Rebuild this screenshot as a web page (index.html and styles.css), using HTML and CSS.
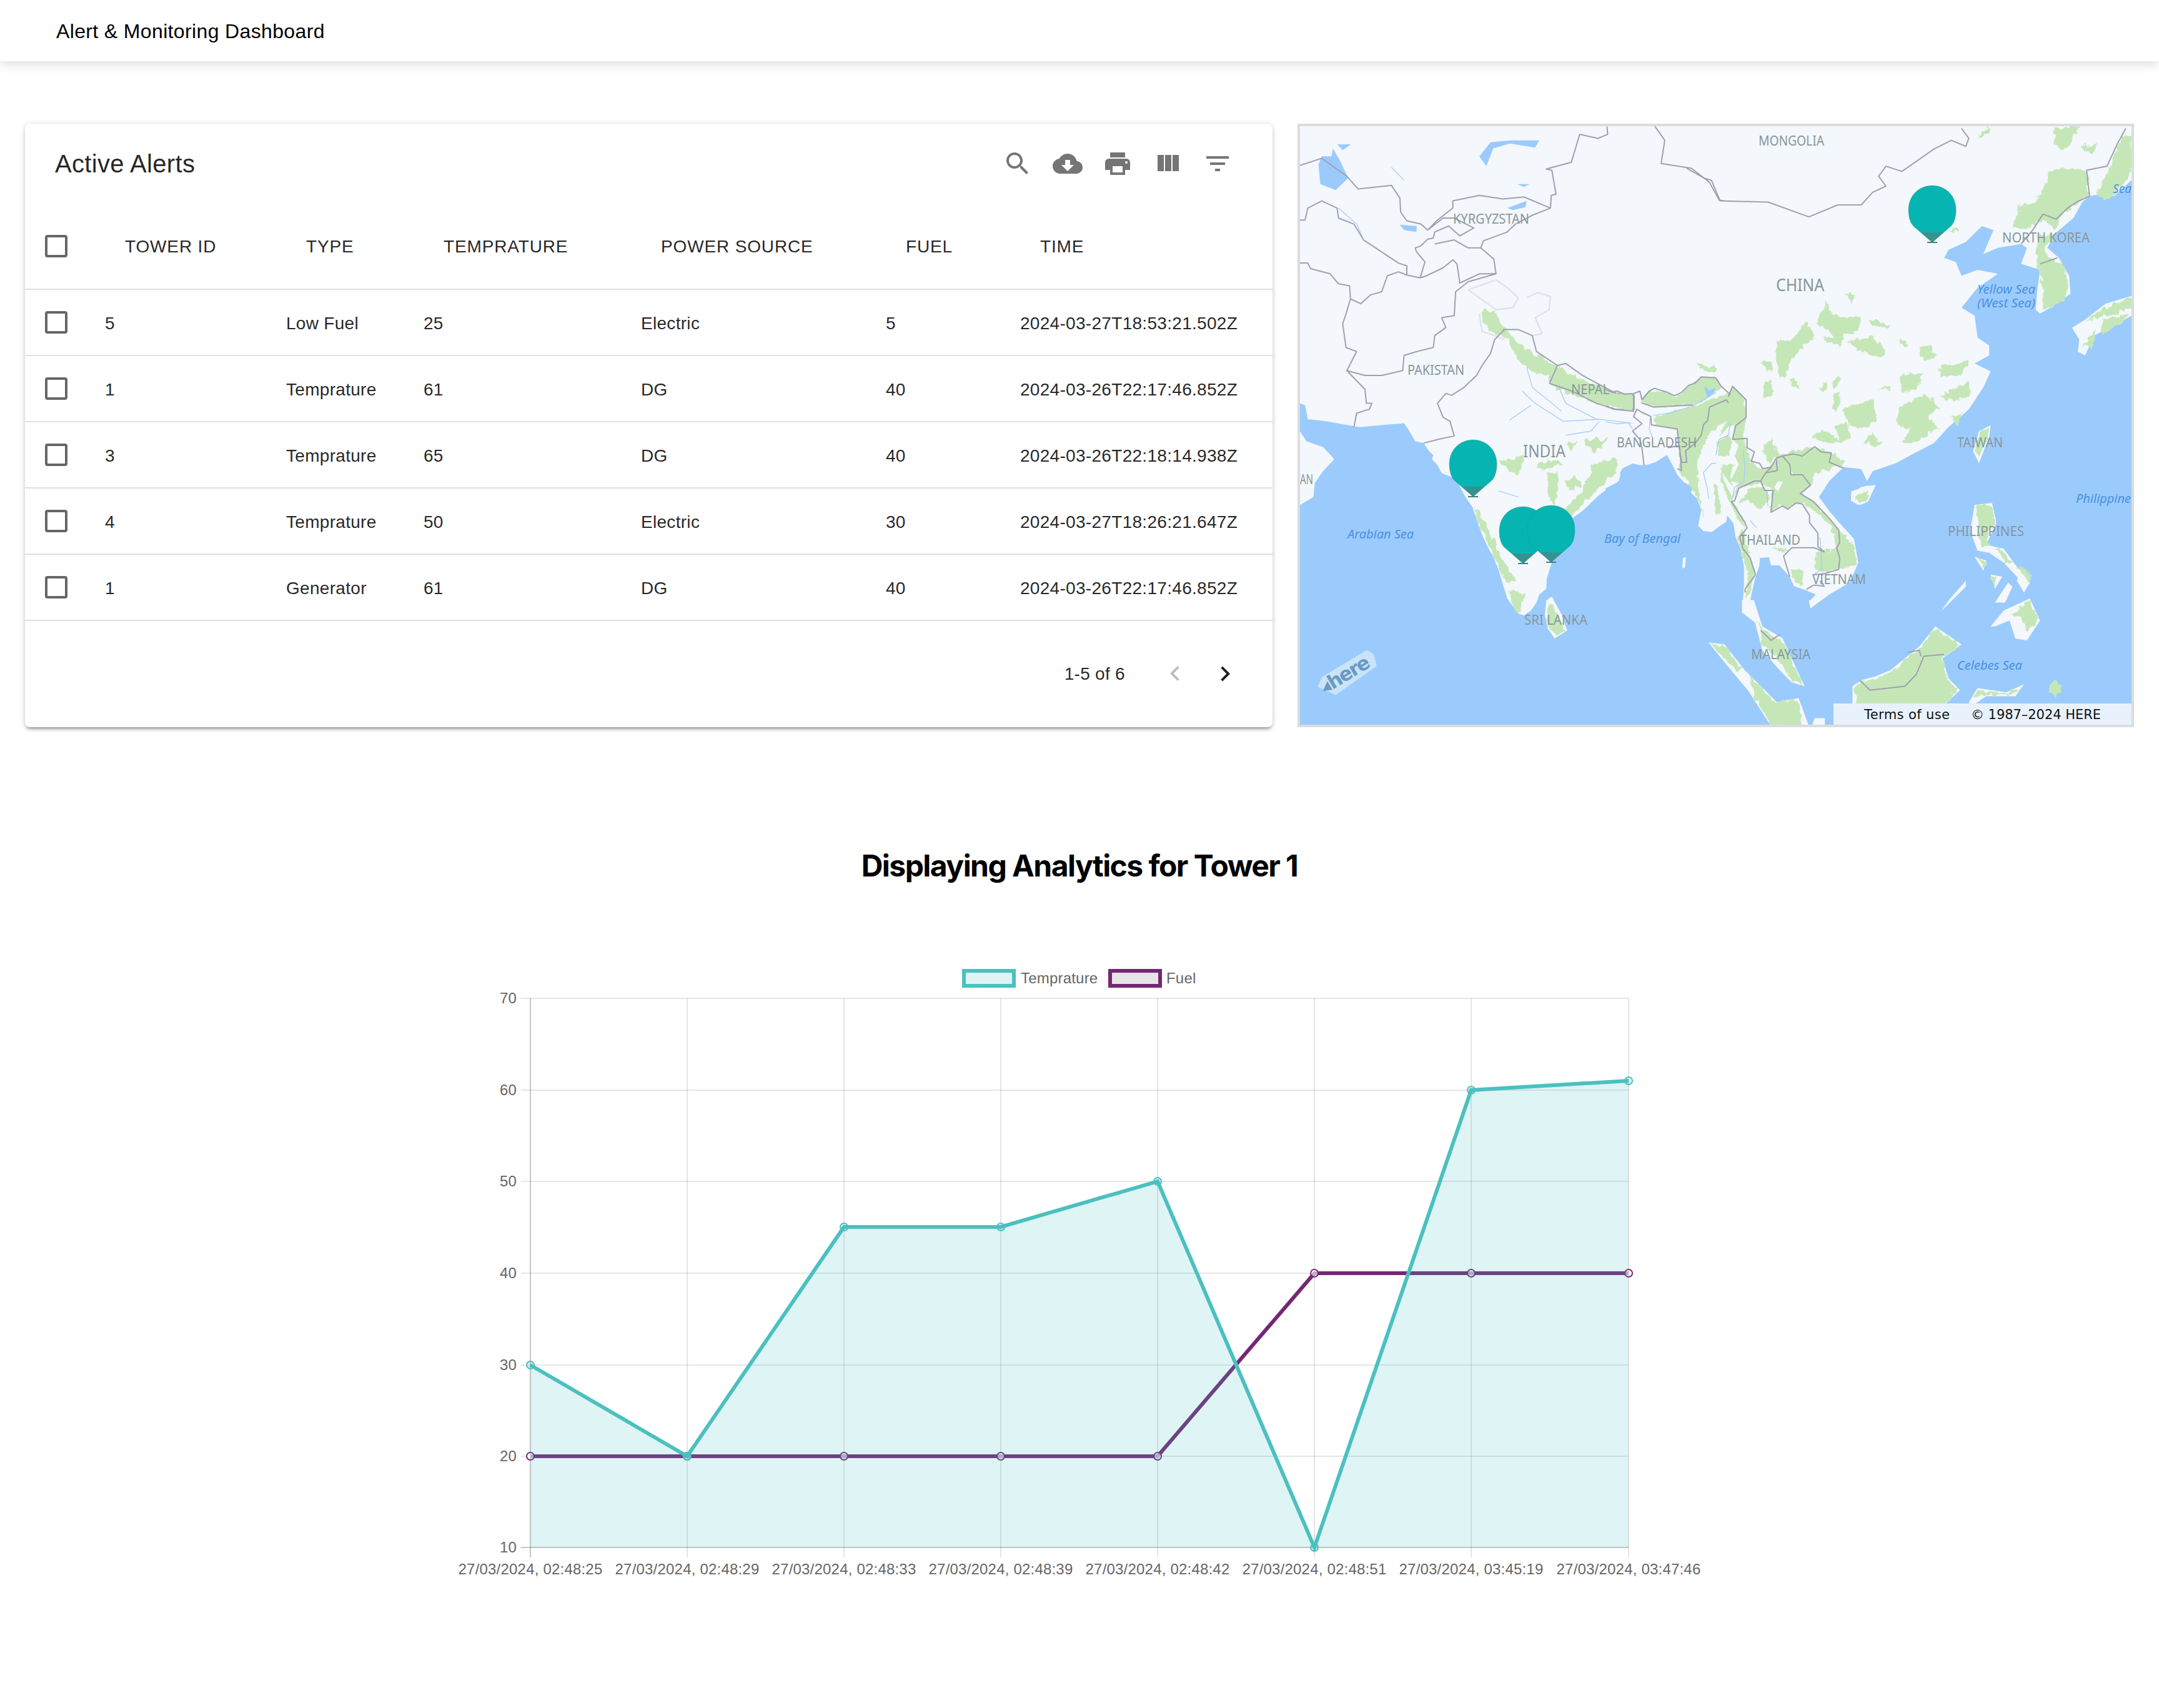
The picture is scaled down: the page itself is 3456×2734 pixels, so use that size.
FILE: index.html
```html
<!DOCTYPE html>
<html lang="en">
<head>
    <meta charset="UTF-8">
    <title>Alert &amp; Monitoring Dashboard</title>
    <link rel="stylesheet" href="styles.css">
</head>
<body>
<header class="appbar">Alert &amp; Monitoring Dashboard</header>

<section class="top-row">
    <div class="card">
        <div class="toolbar">
            <h2 class="card-title">Active Alerts</h2>
            <div class="tools">
                <svg class="icon tool" viewBox="0 0 24 24"><path d="M15.5 14h-.79l-.28-.27C15.41 12.59 16 11.11 16 9.5 16 5.91 13.09 3 9.5 3S3 5.91 3 9.5 5.91 16 9.5 16c1.61 0 3.09-.59 4.23-1.57l.27.28v.79l5 4.99L20.49 19l-4.99-5zm-6 0C7.01 14 5 11.99 5 9.5S7.01 5 9.5 5 14 7.01 14 9.5 11.99 14 9.5 14z"/></svg>
                <svg class="icon tool" viewBox="0 0 24 24"><path d="M19.35 10.04C18.67 6.59 15.64 4 12 4 9.11 4 6.6 5.64 5.35 8.04 2.34 8.36 0 10.91 0 14c0 3.31 2.69 6 6 6h13c2.76 0 5-2.24 5-5 0-2.64-2.05-4.78-4.65-4.96zM17 13l-5 5-5-5h3V9h4v4h3z"/></svg>
                <svg class="icon tool" viewBox="0 0 24 24"><path d="M19 8H5c-1.66 0-3 1.34-3 3v6h4v4h12v-4h4v-6c0-1.66-1.34-3-3-3zm-3 11H8v-5h8v5zm3-7c-.55 0-1-.45-1-1s.45-1 1-1 1 .45 1 1-.45 1-1 1zm-1-9H6v4h12V3z"/></svg>
                <svg class="icon tool" viewBox="0 0 24 24"><path d="M10 18h5V5h-5v13zm-6 0h5V5H4v13zM16 5v13h5V5h-5z"/></svg>
                <svg class="icon tool" viewBox="0 0 24 24"><path d="M10 18h4v-2h-4v2zM3 6v2h18V6H3zm3 7h12v-2H6v2z"/></svg>
            </div>
        </div>
        <table class="alerts">
            <colgroup>
                <col class="c-check"><col class="c-id"><col class="c-type"><col class="c-temp"><col class="c-power"><col class="c-fuel"><col class="c-time">
            </colgroup>
            <thead>
                <tr>
                    <th class="check"><span class="box"></span></th>
                    <th>TOWER ID</th><th>TYPE</th><th>TEMPRATURE</th><th>POWER SOURCE</th><th>FUEL</th><th>TIME</th>
                </tr>
            </thead>
            <tbody>
                <tr><td class="check"><span class="box"></span></td><td>5</td><td>Low Fuel</td><td>25</td><td>Electric</td><td>5</td><td>2024-03-27T18:53:21.502Z</td></tr>
                <tr><td class="check"><span class="box"></span></td><td>1</td><td>Temprature</td><td>61</td><td>DG</td><td>40</td><td>2024-03-26T22:17:46.852Z</td></tr>
                <tr><td class="check"><span class="box"></span></td><td>3</td><td>Temprature</td><td>65</td><td>DG</td><td>40</td><td>2024-03-26T22:18:14.938Z</td></tr>
                <tr><td class="check"><span class="box"></span></td><td>4</td><td>Temprature</td><td>50</td><td>Electric</td><td>30</td><td>2024-03-27T18:26:21.647Z</td></tr>
                <tr><td class="check"><span class="box"></span></td><td>1</td><td>Generator</td><td>61</td><td>DG</td><td>40</td><td>2024-03-26T22:17:46.852Z</td></tr>
            </tbody>
        </table>
        <div class="pager">
            <span class="pager-text">1-5 of 6</span>
            <svg class="icon page-btn off" viewBox="0 0 24 24"><path d="M15.41 16.09l-4.58-4.59 4.58-4.59L14 5.5l-6 6 6 6z"/></svg>
            <svg class="icon page-btn on" viewBox="0 0 24 24"><path d="M8.59 16.34l4.58-4.59-4.58-4.59L10 5.75l6 6-6 6z"/></svg>
        </div>
    </div>

    <div class="map">
        <svg class="map-svg" viewBox="2081 202 1331 958">
            <defs>
                <g id="pin">
                    <path fill="#06b5b2" stroke="#3d7f7e" stroke-opacity=".35" d="M0 0L-30 -26C-36 -32 -38 -43 -38 -52C-38 -76 -20 -91 0 -91C20 -91 38 -76 38 -52C38 -43 36 -32 30 -26Z"/>
                    <path fill="#36928f" d="M0 0L-18 -16H18Z"/>
                    <rect x="-8" y="-1" width="16" height="2" fill="#3d7f7e"/>
                </g>
                <filter id="rough" x="-15%" y="-15%" width="130%" height="130%" color-interpolation-filters="sRGB">
                    <feTurbulence type="fractalNoise" baseFrequency=".05" numOctaves="3" seed="4" result="noise"/>
                    <feDisplacementMap in="SourceGraphic" in2="noise" scale="22" xChannelSelector="R" yChannelSelector="G"/>
                </filter>
            </defs>
            <rect class="land" x="2081" y="202" width="1331" height="958"/>
            <rect class="sea" x="2630" y="950" width="80" height="210"/>

            <!-- west half, traced over the 700x1000 crop -->
            <g transform="translate(2060 180) scale(.4464 .6378)">
                <polygon class="sea" points="47,730 65,735 75,770 140,775 260,790 330,785 420,780 435,795 460,825 490,830 510,850 525,860 520,870 540,885 555,905 590,915 610,925 640,965 665,990 680,1020 700,1060 720,1090 740,1115 760,1150 790,1220 830,1258 850,1262 875,1250 895,1230 905,1210 930,1195 932,1170 945,1140 960,1110 1000,1050 1020,1020 1060,1000 1120,960 1190,925 1200,900 1240,885 1280,885 1300,884 1300,1540 47,1540"/>
                <polygon class="land" points="47,800 70,825 130,840 170,870 130,900 100,930 95,965 47,985"/>
                <polygon class="land" points="930,1225 950,1215 985,1260 1005,1300 960,1320 935,1295 925,1260"/>
                <polygon class="green" points="945,1228 985,1280 1000,1300 960,1315 935,1290 930,1250"/>
                <polygon class="sea" points="113,130 125,110 160,110 165,90 190,120 220,165 175,195 120,180"/>
                <polygon class="sea" points="180,80 230,80 200,95"/>
                <polygon class="sea" points="690,110 730,75 800,70 905,70 890,88 800,78 740,90 715,135"/>
                <polygon class="sea" points="790,240 860,222 855,238 810,245"/>
                <polygon class="sea" points="405,282 465,285 465,300 420,295"/>
                <polygon class="sea" points="825,180 870,180 850,187"/>
                <polygon class="green" points="700,500 740,495 770,530 830,580 900,610 970,635 1000,650 1090,680 1180,700 1245,715 1240,745 1120,730 1030,710 945,685 940,660 880,650 830,620 790,570 730,545 705,530"/>
                <polygon class="green" points="760,875 855,860 800,905"/>
                <polygon class="green" points="800,885 850,870 830,905 790,905"/>
                <polygon class="green" points="1065,820 1150,820 1100,855"/>
                <polygon class="green" points="1000,830 1040,825 1020,850"/>
                <polygon class="green" points="895,885 960,870 990,880 920,900"/>
                <polygon class="green" points="935,900 975,905 960,990 935,965"/>
                <polygon class="green" points="1000,925 1030,915 1060,935 1010,945"/>
                <polygon class="green" points="1060,950 1100,880 1180,870 1185,895 1130,935 1060,985 1020,1015 990,1000"/>
                <polygon class="green" points="675,990 700,1020 745,1080 780,1130 820,1175 790,1180 750,1130 720,1080 680,1020"/>
                <polygon class="green" points="800,1200 850,1205 835,1260 810,1240"/>
                <polyline class="river" points="845,700 890,730 990,775 1120,770 1240,780"/>
                <polyline class="river" points="860,640 880,690 985,750"/>
                <polyline class="river" points="975,690 1000,730 1110,770"/>
                <polyline class="river" points="798,772 875,735"/>
                <polyline class="river" points="1000,810 1090,800 1120,775"/>
                <polyline class="river" points="760,950 830,965"/>
                <polyline class="river" points="375,138 420,170"/>
                <polyline class="river" points="185,240 250,280 275,320"/>
                <polyline class="border" points="47,133 125,115 215,160 255,192 375,183 405,215 408,250 430,272 480,280 505,295 540,270 595,240 595,222 690,208 775,217 850,212 945,240 948,208 965,205 950,145 930,142 1020,125 1050,55 1115,65 1150,55 1148,35"/>
                <polyline class="border" points="1320,35 1355,70 1342,128 1450,140 1515,175 1550,220 1568,222"/>
                <polyline class="border" points="47,270 65,270 75,240 125,222 180,240 185,265 240,280 275,320 400,378 430,385 430,408 478,415 500,410 560,390 595,370 610,380 620,428 690,405 750,405 742,368 695,340 705,322 790,300 820,280 880,258 945,240"/>
                <polyline class="border" points="505,295 560,265 600,265 670,290 620,310 580,285 530,300 525,315 505,318 480,335 460,340 465,350 495,375 478,415"/>
                <polyline class="border" points="530,330 600,320 650,340 695,340"/>
                <polyline class="border" points="47,378 75,378 85,392 155,405 185,430 225,435 228,468 265,480 300,458 340,450 360,410 400,400 430,408"/>
                <polyline class="border" points="228,468 210,510 200,530 212,590 250,600 215,648 280,660 340,660 415,648 420,610 465,600 525,590 530,560 570,540 555,515 600,510 605,450 650,425 750,405"/>
                <polyline class="border" points="215,648 280,695 285,730 305,730 295,745 250,755 240,790"/>
                <polyline class="border-soft" points="650,445 700,470 750,495 810,490 830,465 790,440 750,420 650,445"/>
                <polyline class="border-soft" points="860,465 900,452 945,462 940,495 890,515 915,555 880,560"/>
                <polyline class="border-soft" points="690,505 700,550 745,560 780,570"/>
                <polyline class="border" points="780,545 745,570 730,605 700,635 680,660 635,690 590,710 570,705 540,730 560,765 585,775 600,812 545,820 490,830"/>
                <polyline class="border" points="775,545 830,545 880,560 895,600 970,635 1000,630 1060,660 1180,705 1245,710"/>
                <polyline class="border" points="970,635 942,680 1025,700 1110,730 1180,745 1245,745 1245,710"/>
            </g>

            <!-- east half -->
            <g transform="translate(2700 180) scale(.4655 .6378)">
                <polygon class="sea" points="425,1245 490,1210 560,1180 590,1130 575,1070 525,1030 490,1000 455,965 490,925 540,890 600,895 620,925 640,900 720,880 770,860 850,830 900,790 970,745 1020,690 1045,650 990,630 1040,610 1040,585 1000,565 990,510 945,490 1000,440 1070,405 1000,395 945,410 925,375 885,365 900,345 960,325 1015,285 1055,295 1020,355 1070,340 1150,330 1170,340 1150,380 1215,395 1205,450 1200,495 1215,505 1250,490 1320,455 1315,410 1280,365 1240,340 1265,305 1330,265 1360,225 1385,210 1420,205 1470,210 1530,170 1530,1540 0,1540 0,1223 420,1223"/>
                <polygon class="land" points="1325,540 1370,520 1440,480 1530,460 1530,510 1480,530 1400,560 1370,610 1345,600 1350,570"/>
                <polygon class="green" points="1370,525 1440,490 1530,465 1530,490 1450,510"/>
                <polygon class="green" points="1360,590 1410,545 1395,585"/>
                <polygon class="green" points="1425,520 1520,505 1490,530 1430,555"/>
                <polygon class="land" points="985,850 1005,800 1045,785 1040,815 1005,880"/>
                <polygon class="green" points="990,850 1010,800 1040,790 1035,815 1005,860"/>
                <polygon class="land" points="565,960 600,940 650,935 625,975 590,985 565,975"/>
                <polygon class="green" points="580,960 615,950 600,975"/>
                <polygon class="land" points="990,985 1050,980 1065,1030 1030,1085 1090,1095 1125,1130 1180,1180 1155,1180 1090,1130 1040,1105 1000,1100 975,1050"/>
                <polygon class="green" points="995,985 1050,985 1060,1030 1030,1065 1040,1090 1015,1090 1005,1040"/>
                <polygon class="green" points="1060,1095 1090,1100 1125,1135 1100,1130"/>
                <polygon class="land" points="1045,1290 1090,1250 1180,1220 1215,1275 1170,1325 1130,1320 1110,1275 1060,1290"/>
                <polygon class="green" points="1115,1260 1180,1225 1210,1275 1170,1300 1150,1270"/>
                <polygon class="land" points="1045,1160 1085,1165 1060,1195"/>
                <polygon class="green" points="1045,1165 1070,1165 1055,1190"/>
                <polygon class="land" points="1060,1230 1105,1180 1120,1190 1095,1230"/>
                <polygon class="land" points="990,1115 1030,1125 1020,1150"/>
                <polygon class="green" points="1000,1118 1028,1128 1020,1145"/>
                <polygon class="land" points="1150,1140 1180,1180 1160,1205 1135,1175"/>
                <polygon class="green" points="1130,1140 1180,1150 1180,1180"/>
                <polygon class="land" points="875,1252 960,1190 960,1175 900,1225"/>
                <polygon class="land" points="190,1210 225,1210 260,1290 330,1320 405,1440 360,1430 320,1400 260,1350 235,1280 190,1255"/>
                <polygon class="green" points="240,1270 260,1300 330,1325 400,1435 360,1425 300,1360 260,1340"/>
                <polygon class="land" points="75,1330 130,1335 200,1400 310,1480 385,1470 420,1540 290,1540 210,1450 130,1380"/>
                <polygon class="green" points="78,1332 130,1338 190,1400 170,1400 130,1370"/>
                <polygon class="green" points="215,1410 300,1480 380,1475 400,1540 290,1540 235,1470"/>
                <polygon class="land" points="440,1520 475,1520 475,1540 430,1540"/>
                <polygon class="land" points="570,1440 600,1425 650,1415 700,1400 800,1340 855,1290 945,1335 880,1370 900,1420 940,1450 880,1490 570,1540"/>
                <polygon class="green" points="578,1445 600,1430 650,1420 700,1405 800,1345 855,1295 940,1335 878,1370 895,1420 930,1450 870,1500 590,1540"/>
                <polygon class="land" points="970,1480 1000,1445 1100,1455 1160,1435 1130,1465 1030,1465 980,1490"/>
                <polygon class="green" points="1000,1448 1100,1458 1150,1440 1125,1460 1030,1462 985,1475"/>
                <polygon class="green" points="1245,1445 1265,1420 1290,1440 1270,1470"/>
                <polygon class="green" points="1265,40 1350,35 1320,80 1290,95 1265,80"/>
                <polygon class="green" points="1000,65 1040,35 1040,55"/>
                <polygon class="green" points="1350,85 1410,80 1395,105"/>
                <polygon class="green" points="1470,110 1490,60 1530,60 1530,150 1490,190 1440,220 1410,205"/>
                <polygon class="green" points="1250,145 1310,140 1380,150 1380,210 1300,250 1270,290 1230,270 1170,290 1120,290 1140,235 1200,225 1240,170"/>
                <polygon class="green" points="1215,310 1270,310 1230,340 1240,360 1290,380 1320,440 1295,475 1230,495 1220,420 1200,370"/>
                <polygon class="green" points="450,520 480,470 500,505 600,515 580,550 540,555 530,585 490,550 440,530"/>
                <polygon class="green" points="625,520 700,530 690,540 640,535"/>
                <polygon class="green" points="555,575 640,560 685,600 670,615 590,595"/>
                <polygon class="green" points="730,570 765,585 750,590"/>
                <polygon class="green" points="550,450 580,460 565,482"/>
                <polygon class="green" points="800,590 830,585 860,610 815,628"/>
                <polygon class="green" points="310,575 360,570 410,525 440,560 380,590 345,640 320,665 305,610"/>
                <polygon class="green" points="250,625 290,630 290,650"/>
                <polygon class="green" points="270,670 300,700 265,715"/>
                <polygon class="green" points="450,695 485,675 470,695"/>
                <polygon class="green" points="500,680 530,660 510,690"/>
                <polygon class="green" points="650,695 700,688 700,698"/>
                <polygon class="green" points="510,705 525,700 515,750 500,745"/>
                <polygon class="green" points="860,640 970,620 945,660 880,665"/>
                <polygon class="green" points="735,660 815,652 795,690 740,705"/>
                <polygon class="green" points="870,710 975,675 975,710 915,725"/>
                <polygon class="green" points="730,740 820,705 870,740 830,760 865,790 790,830 740,830 770,795 725,785"/>
                <polygon class="green" points="535,745 640,720 655,770 600,795 560,785"/>
                <polygon class="green" points="435,810 490,800 525,825 450,830"/>
                <polygon class="green" points="505,785 550,780 560,820 530,825"/>
                <polygon class="green" points="605,830 640,805 675,835 620,835"/>
                <polygon class="green" points="910,765 945,755 930,785"/>
                <polygon class="green" points="290,820 320,860 430,840 495,855 545,875 500,895 440,905 425,940 310,870"/>
                <polygon class="green" points="895,300 930,290 935,300"/>
                <polyline class="border" points="0,140 60,165 85,170 115,222 280,225 420,262 520,232 600,232 640,200 685,185 660,160 685,135 740,148 850,92 910,70 960,85 970,65 945,40"/>
                <polyline class="border" points="1510,40 1480,80 1445,135 1375,145 1385,210 1340,225 1310,240 1270,268 1225,255 1190,295 1150,330"/>
                <polyline class="border" points="1215,380 1275,365"/>
                <polyline class="border" points="255,1300 290,1325 320,1310"/>
                <polyline class="border" points="595,1425 630,1450 750,1440 790,1410 815,1365 885,1360"/>
                <polyline class="border" points="760,1355 800,1350 805,1365"/>
            </g>

            <!-- burma, thailand and indochina, from the 420x420 crop -->
            <g transform="translate(2570 540) scale(.3333)">
                <polygon class="sea" points="0,725 60,695 75,680 70,650 80,630 130,605 180,618 240,600 295,565 320,610 345,660 375,695 420,720 410,745 440,775 460,830 445,905 470,930 510,935 550,905 580,885 585,855 615,895 625,960 650,1020 665,1100 665,1190 660,1262 0,1262"/>
                <polygon class="sea" points="695,1262 720,1150 738,1100 742,1060 785,1055 795,1095 835,1095 885,1150 905,1195 965,1215 1010,1235 985,1262"/>
                <polygon class="land" points="368,1110 372,1060 386,1055 382,1105"/>
                <polygon class="green" points="0,270 130,270 135,340 100,350 0,320"/>
                <polygon class="green" points="170,310 210,260 300,265 340,290 400,235 460,190 530,190 560,240 480,300 420,325 230,335"/>
                <polygon class="green" points="230,385 340,350 440,330 500,300 590,270 610,235 660,280 675,380 660,490 680,530 700,600 740,630 790,620 830,580 880,620 890,660 960,660 990,710 940,750 1000,790 1070,870 1120,920 1190,1000 1210,1090 1120,1110 1040,1130 1000,1100 1110,1000 1080,900 1000,830 960,800 920,795 880,825 840,805 790,840 800,730 750,700 640,720 610,780 660,870 670,920 640,880 600,800 550,680 560,620 600,590 570,540 540,560 530,520 580,400 500,460 460,550 440,600 450,750 470,870 445,780 400,700 350,640 360,600 345,500 345,440 240,420"/>
                <polygon class="land" points="530,560 545,480 590,430 620,420 610,490 640,520 620,570 640,610 600,690 640,700 610,770 570,690 555,630 590,600"/>
                <polygon class="green" points="545,500 590,470 610,500 590,570 540,570"/>
                <polygon class="green" points="550,630 590,605 620,610 600,650 610,720 590,690"/>
                <polygon class="land" points="460,600 500,570 535,570 525,620 550,690 530,700 515,850 490,770 470,690"/>
                <polygon class="green" points="520,705 540,720 555,850 530,850"/>
                <polygon class="land" points="810,720 830,690 850,695 830,740"/>
                <polygon class="green" points="630,800 700,720 750,720 780,730 790,780 740,830 680,780"/>
                <polygon class="green" points="760,520 800,490 820,570 790,610 760,560"/>
                <polygon class="green" points="960,560 1010,530 1080,560 1075,600 1150,590 1130,625 1060,610 1000,600"/>
                <polygon class="green" points="890,570 940,580 970,630 940,620"/>
                <polygon class="green" points="660,920 680,1000 700,1070 720,1120 695,1220 670,1260 685,1140 660,1060 630,960"/>
                <polygon class="green" points="790,1005 880,1020 850,1030"/>
                <polygon class="green" points="890,1110 950,1120 945,1190 920,1180 895,1150"/>
                <polygon class="green" points="1010,1030 1080,1010 1050,1080 1040,1115 1010,1090"/>
                <polygon class="green" points="0,640 45,585 60,610 20,650"/>
                <polygon class="green" points="1030,255 1060,220 1070,240 1040,260"/>
                <polygon class="green" points="1090,230 1120,185 1130,200 1105,240"/>
                <polygon class="green" points="1090,330 1120,265 1125,310 1105,360"/>
                <polygon class="green" points="1140,350 1210,320 1260,310 1260,430 1220,430 1180,390"/>
                <polygon class="green" points="1000,480 1040,450 1110,490 1130,505 1090,510"/>
                <polygon class="green" points="1100,420 1160,420 1170,480 1130,490"/>
                <polygon class="green" points="760,260 790,200 800,280 770,285"/>
                <polygon class="green" points="745,110 800,120 800,165 780,160"/>
                <polygon class="green" points="820,60 860,20 900,60 880,140 860,200 840,180"/>
                <polygon class="green" points="880,100 930,20 1010,0 950,40 900,100"/>
                <polygon class="green" points="880,200 910,195 930,245 900,235"/>
                <polygon class="green" points="1045,0 1140,0 1130,40 1060,20"/>
                <polygon class="green" points="1165,15 1260,10 1260,65 1210,60"/>
                <polygon class="green" points="430,120 500,145 525,130 530,165 490,170"/>
                <polygon class="land" points="1180,740 1260,710 1260,790 1225,805 1180,780"/>
                <polygon class="green" points="1195,770 1260,735 1260,780 1220,795"/>
                <polyline class="river" points="230,375 300,365 420,330 480,295 530,265"/>
                <polygon class="sea" points="475,235 500,255 530,240 520,265 490,290 480,260"/>
                <polyline class="river" points="215,385 210,440 225,480"/>
                <polyline class="river" points="0,405 60,415 110,410 130,440"/>
                <polyline class="river" points="530,565 545,490 590,470 600,410"/>
                <polyline class="river" points="470,650 510,605 530,605"/>
                <polyline class="river" points="470,650 490,730 495,775"/>
                <polyline class="river" points="660,540 670,620 665,690 620,720 610,770"/>
                <polyline class="river" points="695,880 725,915"/>
                <polyline class="river" points="775,740 780,810"/>
                <polyline class="river" points="1030,960 1035,1020 1040,1110 1000,1140"/>
                <polyline class="border" points="0,250 35,265 55,258 90,272 135,270 165,258 175,300 210,258 235,245 300,265 330,280 365,265 400,230 430,220 460,190 530,195 555,235 600,275"/>
                <polyline class="border" points="0,330 40,345 135,355 135,270"/>
                <polyline class="border" points="175,315 230,335 420,325"/>
                <polyline class="border" points="590,315 580,300 500,335 490,400 470,420 460,470 430,510 385,545 390,600 365,600 350,500 345,440 220,420 218,380 175,360 150,345 135,380 175,415 130,450 165,490 175,530 185,615"/>
                <polyline class="border" points="300,530 355,520 365,640 345,630"/>
                <polyline class="border" points="590,285 610,235 660,285 675,300 675,385 625,425 610,490 680,485 680,530 715,550 700,595 740,605 755,630 795,625 770,650 745,690 715,690 640,725 620,785 605,790 625,820 670,890 680,915 645,960 660,1015 695,1060 720,1140 670,1210 670,1225"/>
                <polyline class="border" points="745,690 765,735 805,735 795,840 850,810 875,825 915,795 945,800 980,855 980,890 1020,940 1020,1005 1050,1030 1000,1010 895,1010 855,1050 885,1150"/>
                <polyline class="border" points="820,580 850,570 885,610 890,660 945,660 985,710 935,750 1000,790 1075,870 1120,925 1125,985 1110,1010 1125,1060 1120,1115 1050,1135 1000,1140"/>
                <polyline class="border" points="850,570 900,560 945,570 1005,525 1035,550 1085,555 1075,600 1145,628"/>
                <polyline class="border" points="795,625 820,580 825,640 770,650"/>
                <polyline class="border" points="965,1210 1000,1190 1050,1195 1030,1170"/>
            </g>

            <text class="lbl" x="2326" y="358" textLength="122" lengthAdjust="spacingAndGlyphs">KYRGYZSTAN</text>
            <text class="lbl" x="2253" y="600" textLength="91" lengthAdjust="spacingAndGlyphs">PAKISTAN</text>
            <text class="lbl" x="2515" y="631" textLength="61" lengthAdjust="spacingAndGlyphs">NEPAL</text>
            <text class="lbl big" x="2438" y="732" textLength="68" lengthAdjust="spacingAndGlyphs">INDIA</text>
            <text class="lbl" x="2588" y="716" textLength="128" lengthAdjust="spacingAndGlyphs">BANGLADESH</text>
            <text class="lbl" x="2081" y="775" textLength="21" lengthAdjust="spacingAndGlyphs">AN</text>
            <text class="lbl" x="2440" y="1000" textLength="101" lengthAdjust="spacingAndGlyphs">SRI LANKA</text>
            <text class="lbl" x="2815" y="233" textLength="105" lengthAdjust="spacingAndGlyphs">MONGOLIA</text>
            <text class="lbl" x="3205" y="388" textLength="140" lengthAdjust="spacingAndGlyphs">NORTH KOREA</text>
            <text class="lbl big" x="2843" y="466" textLength="77" lengthAdjust="spacingAndGlyphs">CHINA</text>
            <text class="lbl" x="3133" y="716" textLength="73" lengthAdjust="spacingAndGlyphs">TAIWAN</text>
            <text class="lbl" x="3118" y="858" textLength="122" lengthAdjust="spacingAndGlyphs">PHILIPPINES</text>
            <text class="lbl" x="2785" y="872" textLength="97" lengthAdjust="spacingAndGlyphs">THAILAND</text>
            <text class="lbl" x="2901" y="935" textLength="86" lengthAdjust="spacingAndGlyphs">VIETNAM</text>
            <text class="lbl" x="2803" y="1055" textLength="95" lengthAdjust="spacingAndGlyphs">MALAYSIA</text>
            <text class="lbl-sea" x="2157" y="862" textLength="106" lengthAdjust="spacingAndGlyphs">Arabian Sea</text>
            <text class="lbl-sea" x="2568" y="869" textLength="122" lengthAdjust="spacingAndGlyphs">Bay of Bengal</text>
            <text class="lbl-sea" x="3165" y="470" textLength="93" lengthAdjust="spacingAndGlyphs">Yellow Sea</text>
            <text class="lbl-sea" x="3165" y="492" textLength="93" lengthAdjust="spacingAndGlyphs">(West Sea)</text>
            <text class="lbl-sea" x="3382" y="309" textLength="30" lengthAdjust="spacingAndGlyphs">Sea</text>
            <text class="lbl-sea" x="3323" y="805" textLength="88" lengthAdjust="spacingAndGlyphs">Philippine</text>
            <text class="lbl-sea" x="3133" y="1072" textLength="104" lengthAdjust="spacingAndGlyphs">Celebes Sea</text>

            <use href="#pin" x="2358" y="795"/>
            <use href="#pin" x="2438" y="902"/>
            <use href="#pin" x="2483" y="900"/>
            <use href="#pin" x="3093" y="388"/>

            <g transform="translate(2160 1083) rotate(-31)">
                <polygon class="here-bg" points="-52,-12 -38,-22 46,-22 52,-10 46,8 -34,14"/>
                <polygon class="here-text" points="-48,-2 -34,-12 -34,4"/>
                <text class="here-text" x="-34" y="4">here</text>
            </g>

            <rect class="terms-bg" x="2935" y="1126" width="477" height="34"/>
            <text class="terms" x="2984" y="1151" textLength="137">Terms of use</text>
            <text class="terms" x="3155" y="1151" textLength="208">© 1987–2024 HERE</text>
        </svg>
    </div>
</section>

<h2 class="analytics-title">Displaying Analytics for Tower 1</h2>

<svg class="chart" viewBox="720 1530 2016 1000">
    <!-- legend -->
    <rect class="legend-temp" x="1543" y="1554" width="80" height="24"/>
    <text class="tick" x="1634" y="1574">Temprature</text>
    <rect class="legend-fuel" x="1777" y="1554" width="80" height="24"/>
    <text class="tick" x="1867" y="1574">Fuel</text>

    <!-- horizontal grid -->
    <path class="grid" d="M834 1598H2607M834 1745H2607M834 1891H2607M834 2038H2607M834 2185H2607M834 2331H2607"/>
    <path class="axis" d="M834 2477H2607"/>
    <!-- vertical grid -->
    <path class="grid" d="M1100 1598V2493M1351 1598V2493M1602 1598V2493M1853 1598V2493M2104 1598V2493M2355 1598V2493M2607 1598V2493"/>
    <path class="axis" d="M849 1598V2493"/>

    <g class="tick-y">
        <text x="827" y="1606">70</text>
        <text x="827" y="1753">60</text>
        <text x="827" y="1899">50</text>
        <text x="827" y="2046">40</text>
        <text x="827" y="2193">30</text>
        <text x="827" y="2339">20</text>
        <text x="827" y="2485">10</text>
    </g>
    <g class="tick-x">
        <text x="849" y="2520">27/03/2024, 02:48:25</text>
        <text x="1100" y="2520">27/03/2024, 02:48:29</text>
        <text x="1351" y="2520">27/03/2024, 02:48:33</text>
        <text x="1602" y="2520">27/03/2024, 02:48:39</text>
        <text x="1853" y="2520">27/03/2024, 02:48:42</text>
        <text x="2104" y="2520">27/03/2024, 02:48:51</text>
        <text x="2355" y="2520">27/03/2024, 03:45:19</text>
        <text x="2607" y="2520">27/03/2024, 03:47:46</text>
    </g>

    <!-- fuel sits under the temprature fill, as the chart draws it -->
    <polyline class="line-fuel" points="849,2331 1100,2331 1351,2331 1602,2331 1853,2331 2104,2038 2355,2038 2607,2038"/>
    <g class="dot-fuel">
        <circle cx="849" cy="2331" r="6"/><circle cx="1100" cy="2331" r="6"/><circle cx="1351" cy="2331" r="6"/><circle cx="1602" cy="2331" r="6"/><circle cx="1853" cy="2331" r="6"/><circle cx="2104" cy="2038" r="6"/><circle cx="2355" cy="2038" r="6"/><circle cx="2607" cy="2038" r="6"/>
    </g>
    <polygon class="fill-temp" points="849,2185 1100,2331 1351,1964 1602,1964 1853,1891 2104,2477 2355,1745 2607,1730 2607,2477 849,2477"/>
    <polyline class="line-temp" points="849,2185 1100,2331 1351,1964 1602,1964 1853,1891 2104,2477 2355,1745 2607,1730"/>
    <g class="dot-temp">
        <circle cx="849" cy="2185" r="6"/><circle cx="1100" cy="2331" r="6"/><circle cx="1351" cy="1964" r="6"/><circle cx="1602" cy="1964" r="6"/><circle cx="1853" cy="1891" r="6"/><circle cx="2104" cy="2477" r="6"/><circle cx="2355" cy="1745" r="6"/><circle cx="2607" cy="1730" r="6"/>
    </g>
</svg>
</body>
</html>
```

FILE: styles.css
```css
body, html {
    margin: 0;
    padding: 0;
    background-color: #fff;
    font-family: "Liberation Sans", Arial, sans-serif;
}

.appbar {
    height: 98px;
    line-height: 100px;
    padding-left: 90px;
    font-size: 32px;
    letter-spacing: 0.36px;
    color: #000;
    background-color: #fff;
    box-shadow: 0 6px 16px rgba(0, 0, 0, 0.12);
}

.top-row {
    display: flex;
    gap: 40px;
    padding: 100px 40px 0;
}

.card {
    width: 1997px;
    height: 966px;
    border-radius: 8px;
    background-color: #fff;
    box-shadow: 0 6px 4px -4px rgba(0, 0, 0, 0.3), 0 4px 6px rgba(0, 0, 0, 0.14), 0 0 10px rgba(0, 0, 0, 0.12);
}

.toolbar {
    display: flex;
    align-items: center;
    justify-content: space-between;
    height: 128px;
    padding: 0 48px;
}

.card-title {
    margin: 0;
    font-size: 40px;
    font-weight: 400;
    letter-spacing: 0.32px;
    color: rgba(0, 0, 0, 0.87);
}

.tools {
    display: flex;
}

.icon {
    display: block;
    width: 48px;
    height: 48px;
}

.tool {
    padding: 16px;
    fill: #757575;
}

.alerts {
    width: 1997px;
    table-layout: fixed;
    border-collapse: collapse;
    font-size: 28px;
    letter-spacing: 0.3px;
    color: rgba(0, 0, 0, 0.87);
}

.c-check { width: 96px; }
.c-id { width: 290px; }
.c-type { width: 220px; }
.c-temp { width: 348px; }
.c-power { width: 392px; }
.c-fuel { width: 215px; }

.alerts th {
    height: 134px;
    padding: 2px 0 0 64px;
    font-weight: 400;
    letter-spacing: 0.85px;
    text-align: left;
    border-bottom: 2px solid #e0e0e0;
}

.alerts td {
    height: 100px;
    padding: 4px 0 0 32px;
    border-bottom: 2px solid #e0e0e0;
}

.alerts .check {
    padding: 0 0 0 32px;
}

.box {
    display: block;
    box-sizing: border-box;
    width: 36px;
    height: 36px;
    border: 4px solid #666;
    border-radius: 4px;
}

.pager {
    display: flex;
    align-items: center;
    height: 170px;
    padding-right: 36px;
    justify-content: flex-end;
    font-size: 28px;
    letter-spacing: 0.3px;
    color: rgba(0, 0, 0, 0.87);
}

.pager-text {
    margin-right: 40px;
}

.page-btn {
    padding: 16px;
}

.off { fill: rgba(0, 0, 0, 0.26); }
.on { fill: rgba(0, 0, 0, 0.87); }

.map {
    width: 1339px;
    height: 966px;
    box-sizing: border-box;
    border: 4px solid #dadcde;
}

.map-svg {
    display: block;
    width: 1331px;
    height: 958px;
}

.land { fill: #f4f7fb; }
.sea { fill: #9bcbfd; }
.green { fill: #c5e7b8; filter: url(#rough); }

.border, .border-soft, .river {
    fill: none;
    vector-effect: non-scaling-stroke;
    stroke-linejoin: round;
}

.border { stroke: #a09fb2; stroke-width: 2px; }
.border-soft { stroke: #e0e3ea; stroke-width: 2.5px; }
.river { stroke: #9bcbfd; stroke-width: 1.2px; }

.lbl, .lbl-sea {
    font-family: "Noto Sans", sans-serif;
    font-size: 21px;
}

.lbl { fill: #87979a; }
.lbl.big { font-size: 28px; }
.lbl-sea { fill: #4a90e2; font-style: italic; font-size: 20px; }

.terms {
    font-family: "DejaVu Sans", sans-serif;
    font-size: 21px;
    fill: #111;
}

.terms-bg { fill: #e8f2fd; }

.here-bg { fill: #c9e3f8; }
.here-text {
    fill: #6a9bc3;
    font-family: "DejaVu Sans", sans-serif;
    font-weight: 700;
    font-size: 31px;
    letter-spacing: -2px;
}

.analytics-title {
    margin: 192px 0 0;
    font-family: Inter, sans-serif;
    font-size: 48px;
    line-height: 60px;
    font-weight: 700;
    letter-spacing: -1.55px;
    text-align: center;
    color: #000;
}

.chart {
    display: block;
    width: 2016px;
    height: 1000px;
    margin: 114px auto 0;
}

.chart text {
    font-family: "Liberation Sans", Arial, sans-serif;
    font-size: 24px;
    letter-spacing: 0.2px;
    fill: #666;
}

.tick-y text { text-anchor: end; }
.tick-x text { text-anchor: middle; }

.grid { stroke: rgba(0, 0, 0, 0.1); stroke-width: 2px; fill: none; }
.axis { stroke: rgba(0, 0, 0, 0.22); stroke-width: 2px; fill: none; }

.legend-temp { fill: rgba(75, 192, 192, 0.18); stroke: #4bc0c0; stroke-width: 6px; }
.legend-fuel { fill: rgba(0, 0, 0, 0.1); stroke: #742774; stroke-width: 6px; }

.line-temp { fill: none; stroke: #4bc0c0; stroke-width: 6px; stroke-linejoin: miter; }
.line-fuel { fill: none; stroke: #742774; stroke-width: 6px; }
.fill-temp { fill: rgba(75, 192, 192, 0.18); }

.dot-temp circle { fill: rgba(75, 192, 192, 0.2); stroke: #4bc0c0; stroke-width: 2px; }
.dot-fuel circle { fill: rgba(255, 255, 255, 0.6); stroke: #742774; stroke-width: 2px; }
```
